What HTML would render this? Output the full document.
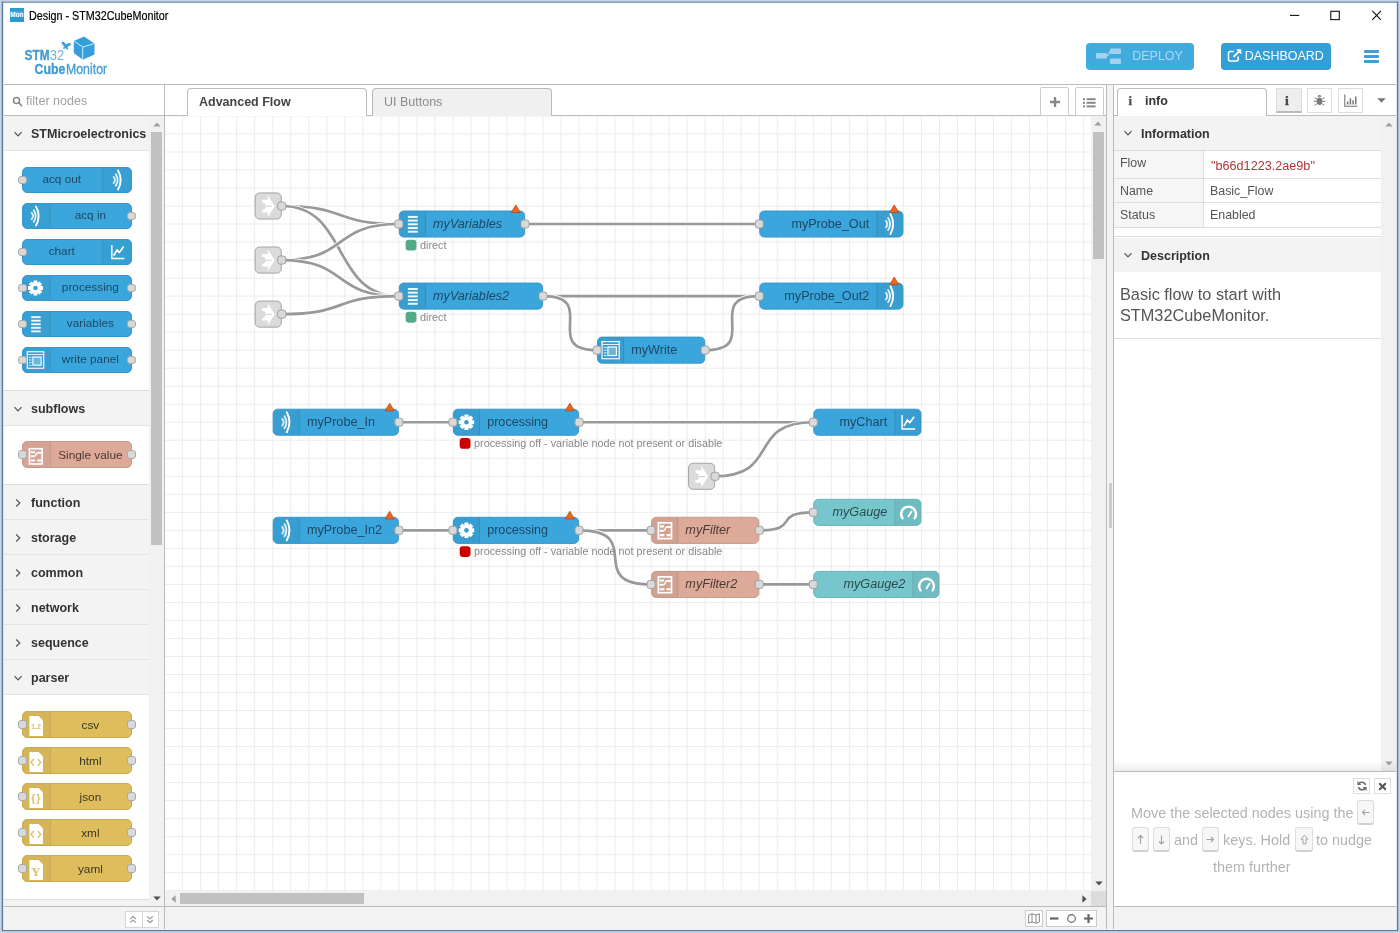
<!DOCTYPE html>
<html>
<head>
<meta charset="utf-8">
<title>Design - STM32CubeMonitor</title>
<style>
*{box-sizing:border-box;margin:0;padding:0}
html,body{width:1400px;height:933px;overflow:hidden;background:#fff;font-family:"Liberation Sans",sans-serif;color:#333}
.abs{position:absolute}
#win{position:absolute;left:0;top:0;width:1400px;height:933px;background:#fff;overflow:hidden;will-change:transform;-webkit-font-smoothing:antialiased}
/* window frame */
/* title bar */
#title{left:29px;top:8.8px;font-size:12px;line-height:14px;color:#000;transform:scaleX(.897);transform-origin:0 0;white-space:nowrap;-webkit-text-stroke:.2px #000}
#appicon{left:10px;top:8px;width:14px;height:14px}
/* header */
#hdrline{left:3px;top:84px;width:1394px;height:1px;background:#bbb}
.hbtn{top:43.3px;height:26.8px;border-radius:4px;color:#fff;font-size:12.5px;line-height:27px;white-space:nowrap}
#deploy{left:1086.2px;width:107.4px;background:#41abde}
#dash{left:1220.7px;width:110.6px;background:#329fd8}
/* palette */
#pal{left:3px;top:85px;width:162px;height:845px;background:#fff;border-right:1px solid #bbb}
#palsearch{left:0;top:0;width:161px;height:31px;border-bottom:1px solid #bbb;background:#fff}
#palbody{left:0;top:31px;width:146px;height:790px;background:#fff;overflow:hidden}
#palscroll{left:146px;top:31px;width:15px;height:790px;background:#f1f1f1}
#palfoot{left:0;top:821px;width:161px;height:24px;background:#f3f3f3;border-top:1px solid #bbb}
.cat{position:absolute;left:0;width:146px;height:35px;background:#f3f3f3;border-bottom:1px solid #e4e4e4;font-weight:bold;font-size:12.5px;line-height:37px;padding-left:28px;color:#333;white-space:nowrap}
/* workspace */
#wstabs{left:165px;top:85px;width:941px;height:31px;background:#fff;border-bottom:1px solid #bbb}
.tab{position:absolute;top:3px;height:28px;border:1px solid #bbb;border-bottom:none;border-radius:4px 4px 0 0;font-size:12.5px;line-height:26px;padding-left:11px;white-space:nowrap}
#canvas{left:165px;top:116px;width:926px;height:775px;overflow:hidden;background:#fff}
#vscroll{left:1091px;top:116px;width:15px;height:775px;background:#f1f1f1}
#hscroll{left:165px;top:891px;width:926px;height:15px;background:#f1f1f1}
#wsfoot{left:165px;top:906px;width:941px;height:24px;background:#f3f3f3;border-top:1px solid #bbb}
#sep{left:1106px;top:85px;width:8px;height:845px;background:#f3f3f3;border-left:1px solid #bbb;border-right:1px solid #bbb}
/* sidebar */
#side{left:1114px;top:85px;width:283px;height:845px;background:#fff}

.pn{position:absolute;left:19px;width:109.5px;height:26.4px;border:1px solid;border-radius:5px}
.pic{position:absolute;top:0;bottom:0;width:29px;background:rgba(0,0,0,.04)}
.pl{position:absolute;top:-1px;height:24.4px;line-height:24.4px;text-align:center;font-size:11.8px;white-space:nowrap}
.pp{position:absolute;top:7.9px;width:8.6px;height:8.6px;background:#d9d9d9;border:1px solid #aaa;border-radius:3px}
.sbtn{position:absolute;background:#fff;border:1px solid #ccc}
.kbd{position:absolute;border:1px solid #ddd;border-bottom:2px solid #d0d0d0;border-radius:3px;background:#f7f7f7;color:#909090;text-align:center}
.tip{position:absolute;color:#b3b3b3;font-size:14.4px;line-height:18px;white-space:nowrap}
.irow{position:absolute;left:0;width:267px;border-bottom:1px solid #ddd;font-size:12.4px;line-height:14px;color:#555}
.irow .k{position:absolute;left:6px;top:0}
.irow .v{position:absolute;left:96px;top:0}
.shdr{position:absolute;left:0;width:267px;height:34.5px;background:#f3f3f3;font-weight:bold;font-size:12.5px;line-height:36px;padding-left:27px;color:#333}
</style>
</head>
<body>
<div id="win">
  <!-- title bar -->
  <div id="appicon" class="abs"><svg width="14" height="14" viewBox="0 0 14 14"><rect width="14" height="14" fill="#2e9ad2"/><rect x="0" y="3.5" width="14" height="5.5" fill="#7cc3e8" opacity=".55"/><text x="0.6" y="8.7" font-size="7.6" font-weight="bold" fill="#fff" font-family="Liberation Sans, sans-serif" textLength="12.8" lengthAdjust="spacingAndGlyphs">Mon</text></svg></div>
  <div id="title" class="abs">Design - STM32CubeMonitor</div>
  <svg class="abs" style="left:1280px;top:3px" width="117" height="28" viewBox="0 0 117 28" fill="none" stroke="#111" stroke-width="1.1">
    <path d="M10 12.4H19.3"/>
    <rect x="50.8" y="8.3" width="8.5" height="8.3"/>
    <path d="M92.3 7.9L100.9 16.8M100.9 7.9L92.3 16.8" stroke-width="1.15"/>
  </svg>
  <!-- header -->
  <svg id="logo" class="abs" style="left:20px;top:32px" width="100" height="50" viewBox="20 32 100 50" font-family="Liberation Sans, sans-serif">
    <g fill="#3d9dd6">
      <text transform="translate(24.6 60.1) scale(.80 1)" font-size="14.8" font-weight="bold" fill="#3f9bd2" stroke="#3f9bd2" stroke-width=".35">STM</text>
      <text transform="translate(49.8 60.1) scale(.88 1)" font-size="14.6" fill="#73aed6">32</text>
      <text transform="translate(34.6 73.6) scale(.83 1)" font-size="14.8" font-weight="bold" fill="#3f9bd2" stroke="#3f9bd2" stroke-width=".35">Cube</text>
      <text transform="translate(66 73.6) scale(.845 1)" font-size="14.6" fill="#469fd5" stroke="#469fd5" stroke-width=".35">Monitor</text>
    </g>
    <path d="M84.1 36.5L94.5 43.5V54.5L82.8 59.7L73.8 52.9V41Z" fill="#369fdb"/>
    <path d="M74 41.1L82.7 47L94.4 43.6M82.7 47V59.5" stroke="#c9ecfb" stroke-width="1" fill="none"/>
    <g fill="#3f9fd8"><ellipse cx="64" cy="44.2" rx="3.1" ry="1.5" transform="rotate(52 64 44.2)"/><ellipse cx="67.9" cy="45" rx="3.3" ry="1.5" transform="rotate(-22 67.9 45)"/><ellipse cx="64.7" cy="47.6" rx="1.7" ry="1" transform="rotate(-30 64.7 47.6)"/><ellipse cx="67" cy="48" rx="1.6" ry="1" transform="rotate(55 67 48)"/></g>
  </svg>
  <div id="deploy" class="abs hbtn">
    <svg class="abs" style="left:9px;top:4px" width="28" height="18" viewBox="0 0 28 18"><g fill="#9fd3ef"><rect x="1" y="6" width="11" height="5.5" rx="1"/><rect x="15" y="1.5" width="11" height="5.5" rx="1"/><rect x="15" y="11.5" width="11" height="5.5" rx="1"/></g><path d="M12 8.7C14 8.7 13.5 4.2 15.5 4.2" stroke="#9fd3ef" stroke-width="1.3" fill="none"/></svg>
    <span class="abs" style="left:46px;top:0;color:#a9d8f1">DEPLOY</span>
  </div>
  <div id="dash" class="abs hbtn">
    <svg class="abs" style="left:6px;top:5px" width="16" height="15" viewBox="0 0 16 15" fill="none" stroke="#fff"><path d="M11.2 8.6V11.4A1.6 1.6 0 0 1 9.6 13H3.1A1.6 1.6 0 0 1 1.5 11.4V5.1A1.6 1.6 0 0 1 3.1 3.5H7" stroke-width="1.6"/><path d="M6.6 8.9L13.2 2.3" stroke-width="2"/><path d="M9 1.2H14.3V6.5Z" fill="#fff" stroke="none"/></svg>
    <span class="abs" style="left:24px;top:0;color:#fff">DASHBOARD</span>
  </div>
  <div class="abs" style="left:1364px;top:50px;width:15px;height:2.6px;background:#3e9fd8;border-radius:1px"></div>
  <div class="abs" style="left:1364px;top:55px;width:15px;height:2.6px;background:#3e9fd8;border-radius:1px"></div>
  <div class="abs" style="left:1364px;top:60px;width:15px;height:2.6px;background:#3e9fd8;border-radius:1px"></div>
  <div id="hdrline" class="abs"></div>
  <!-- palette -->
  <div id="pal" class="abs">
    <div id="palsearch" class="abs">
      <svg class="abs" style="left:9px;top:11px" width="11" height="11" viewBox="0 0 11 11" fill="none" stroke="#8a8a8a" stroke-width="1.6"><circle cx="4.5" cy="4.5" r="3"/><path d="M6.8 6.8L9.6 9.6" stroke-linecap="round"/></svg>
      <div class="abs" style="left:23px;top:9px;font-size:12.5px;line-height:15px;color:#a0a0a0">filter nodes</div>
    </div>
    <div id="palbody" class="abs"><div class="cat" style="top:0px"><svg class="abs" style="left:10.3px;top:13px" width="10" height="10" viewBox="0 0 10 10" fill="none" stroke="#555" stroke-width="1.2"><path d="M1.5 3.2L5 6.8L8.5 3.2"/></svg>STMicroelectronics</div>
<div class="pn" style="top:51px;background:#3ba6dc;border-color:#3796cb"><div class="pic" style="right:0;border-left:1px solid rgba(0,0,0,.06);border-radius:0 4px 4px 0"></div><svg class="abs" style="left:80px;top:-1px" width="29" height="26" viewBox="0 0 30 30" fill="none" stroke="#fff" stroke-linecap="round"><path d="M10.6 11.4Q13.6 15 10.6 18.6" stroke-width="2.2" opacity=".8"/><path d="M13 8.3Q17.4 15 13 21.7" stroke-width="2" opacity=".9"/><path d="M15.6 4Q21.6 15 15.6 26" stroke-width="2.2"/></svg><div class="pl" style="left:0;top:-1px;width:77.5px;color:#1c4866">acq out</div><div class="pp" style="left:-5px"></div></div>
<div class="pn" style="top:87px;background:#3ba6dc;border-color:#3796cb"><div class="pic" style="left:0;width:28px;border-right:1px solid rgba(0,0,0,.06);border-radius:4px 0 0 4px"></div><svg class="abs" style="left:-1.6px;top:-1px" width="29" height="26" viewBox="0 0 30 30" fill="none" stroke="#fff" stroke-linecap="round"><path d="M10.6 11.4Q13.6 15 10.6 18.6" stroke-width="2.2" opacity=".8"/><path d="M13 8.3Q17.4 15 13 21.7" stroke-width="2" opacity=".9"/><path d="M15.6 4Q21.6 15 15.6 26" stroke-width="2.2"/></svg><div class="pl" style="left:27.4px;top:-1px;width:80px;color:#1c4866">acq in</div><div class="pp" style="right:-5px"></div></div>
<div class="pn" style="top:123px;background:#3ba6dc;border-color:#3796cb"><div class="pic" style="right:0;border-left:1px solid rgba(0,0,0,.06);border-radius:0 4px 4px 0"></div><svg class="abs" style="left:80px;top:-1px" width="29" height="26" viewBox="0 0 30 30" fill="none" stroke="#fff" stroke-width="1.6"><path d="M8.5 7V22.5H23"/><path d="M11 18.5L14.5 12.5L17 15.5L21.5 9.5" stroke-width="1.9" stroke-linejoin="round" stroke-linecap="round"/></svg><div class="pl" style="left:0;top:-1px;width:77.5px;color:#1c4866">chart</div><div class="pp" style="left:-5px"></div></div>
<div class="pn" style="top:159px;background:#3ba6dc;border-color:#3796cb"><div class="pic" style="left:0;width:28px;border-right:1px solid rgba(0,0,0,.06);border-radius:4px 0 0 4px"></div><svg class="abs" style="left:-1.6px;top:-1px" width="29" height="26" viewBox="0 0 30 30"><g fill="#fff"><rect x="-2.3" y="-8.6" width="4.6" height="5" rx=".6" transform="translate(15 15) rotate(0)"/><rect x="-2.3" y="-8.6" width="4.6" height="5" rx=".6" transform="translate(15 15) rotate(45)"/><rect x="-2.3" y="-8.6" width="4.6" height="5" rx=".6" transform="translate(15 15) rotate(90)"/><rect x="-2.3" y="-8.6" width="4.6" height="5" rx=".6" transform="translate(15 15) rotate(135)"/><rect x="-2.3" y="-8.6" width="4.6" height="5" rx=".6" transform="translate(15 15) rotate(180)"/><rect x="-2.3" y="-8.6" width="4.6" height="5" rx=".6" transform="translate(15 15) rotate(225)"/><rect x="-2.3" y="-8.6" width="4.6" height="5" rx=".6" transform="translate(15 15) rotate(270)"/><rect x="-2.3" y="-8.6" width="4.6" height="5" rx=".6" transform="translate(15 15) rotate(315)"/><path fill-rule="evenodd" d="M15 8.6a6.4 6.4 0 1 0 0 12.8a6.4 6.4 0 1 0 0-12.8zM15 12.4a2.6 2.6 0 1 1 0 5.2a2.6 2.6 0 1 1 0-5.2z"/></g></svg><div class="pl" style="left:27.4px;top:-1px;width:80px;color:#1c4866">processing</div><div class="pp" style="left:-5px"></div><div class="pp" style="right:-5px"></div></div>
<div class="pn" style="top:195px;background:#3ba6dc;border-color:#3796cb"><div class="pic" style="left:0;width:28px;border-right:1px solid rgba(0,0,0,.06);border-radius:4px 0 0 4px"></div><svg class="abs" style="left:-1.6px;top:-1px" width="29" height="26" viewBox="0 0 30 30"><g fill="#fff" opacity=".92"><rect x="10" y="6" width="11" height="2.2"/><rect x="10" y="10.1" width="11" height="2.2"/><rect x="10" y="14.2" width="11" height="2.2"/><rect x="10" y="18.3" width="11" height="2.2"/><rect x="10" y="22.4" width="11" height="2.2"/></g></svg><div class="pl" style="left:27.4px;top:-1px;width:80px;color:#1c4866">variables</div><div class="pp" style="left:-5px"></div><div class="pp" style="right:-5px"></div></div>
<div class="pn" style="top:231px;background:#3ba6dc;border-color:#3796cb"><div class="pic" style="left:0;width:28px;border-right:1px solid rgba(0,0,0,.06);border-radius:4px 0 0 4px"></div><svg class="abs" style="left:-1.6px;top:-1px" width="29" height="26" viewBox="0 0 30 30" fill="none" stroke="#fff" stroke-width="1.3"><rect x="5.5" y="5.5" width="19" height="19"/><path d="M5.5 8.7H24.5" stroke-width="1"/><rect x="12" y="11.5" width="9.5" height="9.5" fill="rgba(255,255,255,.25)"/><path d="M7.5 12H10.5M7.5 15H10.5M7.5 18H10.5M7.5 21H10.5" stroke-width="1"/></svg><div class="pl" style="left:27.4px;top:-1px;width:80px;color:#1c4866">write panel</div><div class="pp" style="left:-5px"></div><div class="pp" style="right:-5px"></div></div>
<div class="abs" style="left:0;top:274px;width:146px;height:1px;background:#ddd"></div>
<div class="cat" style="top:275px"><svg class="abs" style="left:10.3px;top:13px" width="10" height="10" viewBox="0 0 10 10" fill="none" stroke="#555" stroke-width="1.2"><path d="M1.5 3.2L5 6.8L8.5 3.2"/></svg>subflows</div>
<div class="pn" style="top:325.4px;background:#ddaa99;border-color:#c49a8c"><div class="pic" style="left:0;width:28px;border-right:1px solid rgba(0,0,0,.06);border-radius:4px 0 0 4px"></div><svg class="abs" style="left:-1.6px;top:0.3px" width="29" height="26" viewBox="0 0 30 30" fill="none" stroke="#fff"><rect x="8" y="6.6" width="14.6" height="17.6" stroke-width="1.9"/><path d="M9.5 10.6h5M9.5 15.4h4M9.5 20.3h5.2M17 20.3h4.6M17.2 11.3h4.4" stroke-width="2.3"/><path d="M13.5 15.4c2.6 0 1.6-4.1 4.4-4.1" stroke-width="1.6"/></svg><div class="pl" style="left:27.4px;top:0.3px;width:80px;color:#4a3933">Single value</div><div class="pp" style="left:-5px"></div><div class="pp" style="right:-5px"></div></div>
<div class="abs" style="left:0;top:368px;width:146px;height:1px;background:#ddd"></div>
<div class="cat" style="top:369px"><svg class="abs" style="left:10.3px;top:13px" width="10" height="10" viewBox="0 0 10 10" fill="none" stroke="#555" stroke-width="1.2"><path d="M3.2 1.5L6.8 5L3.2 8.5"/></svg>function</div>
<div class="cat" style="top:404px"><svg class="abs" style="left:10.3px;top:13px" width="10" height="10" viewBox="0 0 10 10" fill="none" stroke="#555" stroke-width="1.2"><path d="M3.2 1.5L6.8 5L3.2 8.5"/></svg>storage</div>
<div class="cat" style="top:439px"><svg class="abs" style="left:10.3px;top:13px" width="10" height="10" viewBox="0 0 10 10" fill="none" stroke="#555" stroke-width="1.2"><path d="M3.2 1.5L6.8 5L3.2 8.5"/></svg>common</div>
<div class="cat" style="top:474px"><svg class="abs" style="left:10.3px;top:13px" width="10" height="10" viewBox="0 0 10 10" fill="none" stroke="#555" stroke-width="1.2"><path d="M3.2 1.5L6.8 5L3.2 8.5"/></svg>network</div>
<div class="cat" style="top:509px"><svg class="abs" style="left:10.3px;top:13px" width="10" height="10" viewBox="0 0 10 10" fill="none" stroke="#555" stroke-width="1.2"><path d="M3.2 1.5L6.8 5L3.2 8.5"/></svg>sequence</div>
<div class="cat" style="top:544px"><svg class="abs" style="left:10.3px;top:13px" width="10" height="10" viewBox="0 0 10 10" fill="none" stroke="#555" stroke-width="1.2"><path d="M1.5 3.2L5 6.8L8.5 3.2"/></svg>parser</div>
<div class="pn" style="top:595.4px;background:#debd5c;border-color:#c9aa52"><div class="pic" style="left:0;width:28px;border-right:1px solid rgba(0,0,0,.06);border-radius:4px 0 0 4px"></div><svg class="abs" style="left:-1.6px;top:0.3px" width="29" height="26" viewBox="0 0 30 30"><path d="M8 3.6H18.6L23.6 8.6V26.6H8Z" fill="#fff"/><text x="15.4" y="18" font-size="8.8" font-weight="bold" text-anchor="middle" fill="#dcc06c" font-family="Liberation Sans,sans-serif" letter-spacing="-.3">1.2</text></svg><div class="pl" style="left:27.4px;top:0.3px;width:80px;color:#3b3627">csv</div><div class="pp" style="left:-5px"></div><div class="pp" style="right:-5px"></div></div>
<div class="pn" style="top:631.4px;background:#debd5c;border-color:#c9aa52"><div class="pic" style="left:0;width:28px;border-right:1px solid rgba(0,0,0,.06);border-radius:4px 0 0 4px"></div><svg class="abs" style="left:-1.6px;top:0.3px" width="29" height="26" viewBox="0 0 30 30"><path d="M8 3.6H18.6L23.6 8.6V26.6H8Z" fill="#fff"/><path d="M13 11.4L9.8 15.4L13 19.4M17.8 11.4L21 15.4L17.8 19.4" fill="none" stroke="#dcc06c" stroke-width="1.6"/></svg><div class="pl" style="left:27.4px;top:0.3px;width:80px;color:#3b3627">html</div><div class="pp" style="left:-5px"></div><div class="pp" style="right:-5px"></div></div>
<div class="pn" style="top:667.4px;background:#debd5c;border-color:#c9aa52"><div class="pic" style="left:0;width:28px;border-right:1px solid rgba(0,0,0,.06);border-radius:4px 0 0 4px"></div><svg class="abs" style="left:-1.6px;top:0.3px" width="29" height="26" viewBox="0 0 30 30"><path d="M8 3.6H18.6L23.6 8.6V26.6H8Z" fill="#fff"/><text x="15.8" y="20" font-size="12.5" font-weight="bold" text-anchor="middle" fill="#dcc06c" font-family="Liberation Sans,sans-serif" letter-spacing="1.2">{}</text></svg><div class="pl" style="left:27.4px;top:0.3px;width:80px;color:#3b3627">json</div><div class="pp" style="left:-5px"></div><div class="pp" style="right:-5px"></div></div>
<div class="pn" style="top:703.4px;background:#debd5c;border-color:#c9aa52"><div class="pic" style="left:0;width:28px;border-right:1px solid rgba(0,0,0,.06);border-radius:4px 0 0 4px"></div><svg class="abs" style="left:-1.6px;top:0.3px" width="29" height="26" viewBox="0 0 30 30"><path d="M8 3.6H18.6L23.6 8.6V26.6H8Z" fill="#fff"/><path d="M13 11.4L9.8 15.4L13 19.4M17.8 11.4L21 15.4L17.8 19.4" fill="none" stroke="#dcc06c" stroke-width="1.6"/></svg><div class="pl" style="left:27.4px;top:0.3px;width:80px;color:#3b3627">xml</div><div class="pp" style="left:-5px"></div><div class="pp" style="right:-5px"></div></div>
<div class="pn" style="top:739.4px;background:#debd5c;border-color:#c9aa52"><div class="pic" style="left:0;width:28px;border-right:1px solid rgba(0,0,0,.06);border-radius:4px 0 0 4px"></div><svg class="abs" style="left:-1.6px;top:0.3px" width="29" height="26" viewBox="0 0 30 30"><path d="M8 3.6H18.6L23.6 8.6V26.6H8Z" fill="#fff"/><text x="15.4" y="21.4" font-size="15.5" font-weight="bold" text-anchor="middle" fill="#dcc06c" font-family="Liberation Serif,serif">Y</text></svg><div class="pl" style="left:27.4px;top:0.3px;width:80px;color:#3b3627">yaml</div><div class="pp" style="left:-5px"></div><div class="pp" style="right:-5px"></div></div>
<div class="abs" style="left:0;top:783px;width:146px;height:7px;background:#f3f3f3;border-top:1px solid #ddd"></div></div>
    <div id="palscroll" class="abs">
      <svg class="abs" style="left:3.5px;top:5.5px" width="8" height="5" viewBox="0 0 8 5"><path d="M.3 4.6L4 .6L7.7 4.6Z" fill="#a0a0a0"/></svg>
      <div class="abs" style="left:2px;top:16px;width:11px;height:413px;background:#c1c1c1"></div>
      <svg class="abs" style="left:3.5px;top:779.5px" width="8" height="5" viewBox="0 0 8 5"><path d="M.3 .4L4 4.6L7.7 .4Z" fill="#505050"/></svg>
    </div>
    <div id="palfoot" class="abs">
      <div class="sbtn" style="left:121.5px;top:3.6px;width:17px;height:17px;border-right:none;border-color:#d6d6d6"></div>
      <div class="sbtn" style="left:138.5px;top:3.6px;width:17px;height:17px;border-color:#d6d6d6"></div>
      <svg class="abs" style="left:126px;top:8px" width="8" height="9" viewBox="0 0 8 9" fill="none" stroke="#999" stroke-width="1.2"><path d="M1.2 4L4 1.4L6.8 4M1.2 7.6L4 5L6.8 7.6"/></svg>
      <svg class="abs" style="left:143px;top:8px" width="8" height="9" viewBox="0 0 8 9" fill="none" stroke="#999" stroke-width="1.2"><path d="M1.2 1.4L4 4L6.8 1.4M1.2 5L4 7.6L6.8 5"/></svg>
    </div>
  </div>
  <!-- workspace -->
  <div id="wstabs" class="abs">
    <div class="tab" style="left:22px;width:180px;background:#fff;height:29px;font-weight:bold;color:#444">Advanced Flow</div>
    <div class="tab" style="left:207px;width:180px;background:#f0f0f0;color:#8a8a8a">UI Buttons</div>
    <div class="sbtn" style="left:875.3px;top:2.2px;width:29px;height:29.3px;border-radius:2px 2px 0 0"></div>
    <div class="sbtn" style="left:910px;top:2.2px;width:28.7px;height:29.3px;border-radius:2px 2px 0 0"></div>
    <svg class="abs" style="left:884px;top:11px" width="12" height="12" viewBox="0 0 12 12"><path d="M6 1V11M1 6H11" stroke="#888" stroke-width="2.4" fill="none"/></svg>
    <svg class="abs" style="left:918px;top:13px" width="13" height="10" viewBox="0 0 13 10" fill="#888"><rect x="0" y=".2" width="2" height="2"/><rect x="3.6" y=".2" width="9" height="2"/><rect x="0" y="3.8" width="2" height="2"/><rect x="3.6" y="3.8" width="9" height="2"/><rect x="0" y="7.4" width="2" height="2"/><rect x="3.6" y="7.4" width="9" height="2"/></svg>
  </div>
  <div id="canvas" class="abs"><svg width="926" height="775" viewBox="0 0 926 775" font-family="Liberation Sans, sans-serif"><g transform="translate(-.4 -.1) scale(.901)"><path d="M0 0V862M20 0V862M40 0V862M60 0V862M80 0V862M100 0V862M120 0V862M140 0V862M160 0V862M180 0V862M200 0V862M220 0V862M240 0V862M260 0V862M280 0V862M300 0V862M320 0V862M340 0V862M360 0V862M380 0V862M400 0V862M420 0V862M440 0V862M460 0V862M480 0V862M500 0V862M520 0V862M540 0V862M560 0V862M580 0V862M600 0V862M620 0V862M640 0V862M660 0V862M680 0V862M700 0V862M720 0V862M740 0V862M760 0V862M780 0V862M800 0V862M820 0V862M840 0V862M860 0V862M880 0V862M900 0V862M920 0V862M940 0V862M960 0V862M980 0V862M1000 0V862M1020 0V862M0 0H1030M0 20H1030M0 40H1030M0 60H1030M0 80H1030M0 100H1030M0 120H1030M0 140H1030M0 160H1030M0 180H1030M0 200H1030M0 220H1030M0 240H1030M0 260H1030M0 280H1030M0 300H1030M0 320H1030M0 340H1030M0 360H1030M0 380H1030M0 400H1030M0 420H1030M0 440H1030M0 460H1030M0 480H1030M0 500H1030M0 520H1030M0 540H1030M0 560H1030M0 580H1030M0 600H1030M0 620H1030M0 640H1030M0 660H1030M0 680H1030M0 700H1030M0 720H1030M0 740H1030M0 760H1030M0 780H1030M0 800H1030M0 820H1030M0 840H1030M0 860H1030" fill="none" stroke="#eaeaea" stroke-width="1"/>
<g fill="none" stroke-linecap="butt">
<path d="M 130 100 C 205 100 185 120 260 120" stroke="#fff" stroke-width="5" opacity=".9"/>
<path d="M 130 100 C 205 100 185 120 260 120" stroke="#999" stroke-width="3"/>
<path d="M 130 100 C 205 100 185 200 260 200" stroke="#fff" stroke-width="5" opacity=".9"/>
<path d="M 130 100 C 205 100 185 200 260 200" stroke="#999" stroke-width="3"/>
<path d="M 130 160 C 205 160 185 120 260 120" stroke="#fff" stroke-width="5" opacity=".9"/>
<path d="M 130 160 C 205 160 185 120 260 120" stroke="#999" stroke-width="3"/>
<path d="M 130 160 C 205 160 185 200 260 200" stroke="#fff" stroke-width="5" opacity=".9"/>
<path d="M 130 160 C 205 160 185 200 260 200" stroke="#999" stroke-width="3"/>
<path d="M 130 220 C 205 220 185 200 260 200" stroke="#fff" stroke-width="5" opacity=".9"/>
<path d="M 130 220 C 205 220 185 200 260 200" stroke="#999" stroke-width="3"/>
<path d="M 400 120 C 475 120 585 120 660 120" stroke="#fff" stroke-width="5" opacity=".9"/>
<path d="M 400 120 C 475 120 585 120 660 120" stroke="#999" stroke-width="3"/>
<path d="M 420 200 C 495 200 585 200 660 200" stroke="#fff" stroke-width="5" opacity=".9"/>
<path d="M 420 200 C 495 200 585 200 660 200" stroke="#999" stroke-width="3"/>
<path d="M 420 200 C 483.64 200 416.36 260 480 260" stroke="#fff" stroke-width="5" opacity=".9"/>
<path d="M 420 200 C 483.64 200 416.36 260 480 260" stroke="#999" stroke-width="3"/>
<path d="M 600 260 C 663.64 260 596.36 200 660 200" stroke="#fff" stroke-width="5" opacity=".9"/>
<path d="M 600 260 C 663.64 260 596.36 200 660 200" stroke="#999" stroke-width="3"/>
<path d="M 260 340 C 305 340 275 340 320 340" stroke="#fff" stroke-width="5" opacity=".9"/>
<path d="M 260 340 C 305 340 275 340 320 340" stroke="#999" stroke-width="3"/>
<path d="M 460 340 C 535 340 645 340 720 340" stroke="#fff" stroke-width="5" opacity=".9"/>
<path d="M 460 340 C 535 340 645 340 720 340" stroke="#999" stroke-width="3"/>
<path d="M 610 400 C 685 400 645 340 720 340" stroke="#fff" stroke-width="5" opacity=".9"/>
<path d="M 610 400 C 685 400 645 340 720 340" stroke="#999" stroke-width="3"/>
<path d="M 260 460 C 305 460 275 460 320 460" stroke="#fff" stroke-width="5" opacity=".9"/>
<path d="M 260 460 C 305 460 275 460 320 460" stroke="#999" stroke-width="3"/>
<path d="M 460 460 C 520 460 480 460 540 460" stroke="#fff" stroke-width="5" opacity=".9"/>
<path d="M 460 460 C 520 460 480 460 540 460" stroke="#999" stroke-width="3"/>
<path d="M 460 460 C 535 460 465 520 540 520" stroke="#fff" stroke-width="5" opacity=".9"/>
<path d="M 460 460 C 535 460 465 520 540 520" stroke="#999" stroke-width="3"/>
<path d="M 660 460 C 707.434 460 672.566 440 720 440" stroke="#fff" stroke-width="5" opacity=".9"/>
<path d="M 660 460 C 707.434 460 672.566 440 720 440" stroke="#999" stroke-width="3"/>
<path d="M 660 520 C 705 520 675 520 720 520" stroke="#fff" stroke-width="5" opacity=".9"/>
<path d="M 660 520 C 705 520 675 520 720 520" stroke="#999" stroke-width="3"/>
</g>
<g transform="translate(100 85)"><rect x=".5" y=".5" width="29" height="29" rx="5" ry="5" fill="#dbdbdb" stroke="#9c9c9c" stroke-width="1"/><g transform="translate(0 0)"><path fill="#fff" d="M14.6 3.2L22.2 15.2L14.6 27.2V22.2H8.2V19.2A4 4 0 0 0 8.2 11.2V8.2H14.6Z"/><path d="M12.3 15.2H19.4" stroke="#cfcfcf" stroke-width="1.1" fill="none"/></g><rect x="25.5" y="10.5" width="9" height="9" rx="3" ry="3" fill="#d9d9d9" stroke="#a0a0a0" stroke-width="1.1"/></g>
<g transform="translate(100 145)"><rect x=".5" y=".5" width="29" height="29" rx="5" ry="5" fill="#dbdbdb" stroke="#9c9c9c" stroke-width="1"/><g transform="translate(0 0)"><path fill="#fff" d="M14.6 3.2L22.2 15.2L14.6 27.2V22.2H8.2V19.2A4 4 0 0 0 8.2 11.2V8.2H14.6Z"/><path d="M12.3 15.2H19.4" stroke="#cfcfcf" stroke-width="1.1" fill="none"/></g><rect x="25.5" y="10.5" width="9" height="9" rx="3" ry="3" fill="#d9d9d9" stroke="#a0a0a0" stroke-width="1.1"/></g>
<g transform="translate(100 205)"><rect x=".5" y=".5" width="29" height="29" rx="5" ry="5" fill="#dbdbdb" stroke="#9c9c9c" stroke-width="1"/><g transform="translate(0 0)"><path fill="#fff" d="M14.6 3.2L22.2 15.2L14.6 27.2V22.2H8.2V19.2A4 4 0 0 0 8.2 11.2V8.2H14.6Z"/><path d="M12.3 15.2H19.4" stroke="#cfcfcf" stroke-width="1.1" fill="none"/></g><rect x="25.5" y="10.5" width="9" height="9" rx="3" ry="3" fill="#d9d9d9" stroke="#a0a0a0" stroke-width="1.1"/></g>
<g transform="translate(260 105)"><rect x=".5" y=".5" width="139" height="29" rx="5" ry="5" fill="#3ba6dc" stroke="#3593c6" stroke-width="1"/><path d="M30 1H5.5A4.5 4.5 0 0 0 1 5.5V24.5A4.5 4.5 0 0 0 5.5 29H30Z" fill="rgba(0,0,0,.05)"/><path d="M29.5 1V29" stroke="rgba(0,0,0,.1)" stroke-width="1" fill="none"/><g transform="translate(0 0)"><g fill="#fff" opacity=".92"><rect x="10" y="6" width="11" height="2.2"/><rect x="10" y="10.1" width="11" height="2.2"/><rect x="10" y="14.2" width="11" height="2.2"/><rect x="10" y="18.3" width="11" height="2.2"/><rect x="10" y="22.4" width="11" height="2.2"/></g></g><text x="38" y="19.2" font-size="14" fill="#1c4866" font-style="italic">myVariables</text><rect x="-4.5" y="10.5" width="9" height="9" rx="3" ry="3" fill="#d9d9d9" stroke="#a0a0a0" stroke-width="1.1"/><rect x="135.5" y="10.5" width="9" height="9" rx="3" ry="3" fill="#d9d9d9" stroke="#a0a0a0" stroke-width="1.1"/><path d="M124.7 2.3L134.8 2.3L129.8 -6.2Z" fill="#ea671d" stroke="#b3420a" stroke-width=".8" stroke-linejoin="round"/><rect x="9" y="34" width="9" height="9" rx="2" ry="2" fill="#5a8" stroke="#5a8" stroke-width="3"/><text x="23.5" y="42.8" font-size="12" fill="#888">direct</text></g>
<g transform="translate(260 185)"><rect x=".5" y=".5" width="159" height="29" rx="5" ry="5" fill="#3ba6dc" stroke="#3593c6" stroke-width="1"/><path d="M30 1H5.5A4.5 4.5 0 0 0 1 5.5V24.5A4.5 4.5 0 0 0 5.5 29H30Z" fill="rgba(0,0,0,.05)"/><path d="M29.5 1V29" stroke="rgba(0,0,0,.1)" stroke-width="1" fill="none"/><g transform="translate(0 0)"><g fill="#fff" opacity=".92"><rect x="10" y="6" width="11" height="2.2"/><rect x="10" y="10.1" width="11" height="2.2"/><rect x="10" y="14.2" width="11" height="2.2"/><rect x="10" y="18.3" width="11" height="2.2"/><rect x="10" y="22.4" width="11" height="2.2"/></g></g><text x="38" y="19.2" font-size="14" fill="#1c4866" font-style="italic">myVariables2</text><rect x="-4.5" y="10.5" width="9" height="9" rx="3" ry="3" fill="#d9d9d9" stroke="#a0a0a0" stroke-width="1.1"/><rect x="155.5" y="10.5" width="9" height="9" rx="3" ry="3" fill="#d9d9d9" stroke="#a0a0a0" stroke-width="1.1"/><rect x="9" y="34" width="9" height="9" rx="2" ry="2" fill="#5a8" stroke="#5a8" stroke-width="3"/><text x="23.5" y="42.8" font-size="12" fill="#888">direct</text></g>
<g transform="translate(660 105)"><rect x=".5" y=".5" width="159" height="29" rx="5" ry="5" fill="#3ba6dc" stroke="#3593c6" stroke-width="1"/><path d="M130 1H154.5A4.5 4.5 0 0 1 159 5.5V24.5A4.5 4.5 0 0 1 154.5 29H130Z" fill="rgba(0,0,0,.05)"/><path d="M130.5 1V29" stroke="rgba(0,0,0,.1)" stroke-width="1" fill="none"/><g transform="translate(130 0)"><g fill="none" stroke="#fff" stroke-linecap="round"><path d="M10.6 11.4Q13.6 15 10.6 18.6" stroke-width="2.2" opacity=".8"/><path d="M13 8.3Q17.4 15 13 21.7" stroke-width="2" opacity=".9"/><path d="M15.6 4Q21.6 15 15.6 26" stroke-width="2.2"/></g></g><text x="122" y="19.2" text-anchor="end" font-size="14" fill="#1c4866">myProbe_Out</text><rect x="-4.5" y="10.5" width="9" height="9" rx="3" ry="3" fill="#d9d9d9" stroke="#a0a0a0" stroke-width="1.1"/><path d="M144.7 2.3L154.8 2.3L149.8 -6.2Z" fill="#ea671d" stroke="#b3420a" stroke-width=".8" stroke-linejoin="round"/></g>
<g transform="translate(660 185)"><rect x=".5" y=".5" width="159" height="29" rx="5" ry="5" fill="#3ba6dc" stroke="#3593c6" stroke-width="1"/><path d="M130 1H154.5A4.5 4.5 0 0 1 159 5.5V24.5A4.5 4.5 0 0 1 154.5 29H130Z" fill="rgba(0,0,0,.05)"/><path d="M130.5 1V29" stroke="rgba(0,0,0,.1)" stroke-width="1" fill="none"/><g transform="translate(130 0)"><g fill="none" stroke="#fff" stroke-linecap="round"><path d="M10.6 11.4Q13.6 15 10.6 18.6" stroke-width="2.2" opacity=".8"/><path d="M13 8.3Q17.4 15 13 21.7" stroke-width="2" opacity=".9"/><path d="M15.6 4Q21.6 15 15.6 26" stroke-width="2.2"/></g></g><text x="122" y="19.2" text-anchor="end" font-size="14" fill="#1c4866">myProbe_Out2</text><rect x="-4.5" y="10.5" width="9" height="9" rx="3" ry="3" fill="#d9d9d9" stroke="#a0a0a0" stroke-width="1.1"/><path d="M144.7 2.3L154.8 2.3L149.8 -6.2Z" fill="#ea671d" stroke="#b3420a" stroke-width=".8" stroke-linejoin="round"/></g>
<g transform="translate(480 245)"><rect x=".5" y=".5" width="119" height="29" rx="5" ry="5" fill="#3ba6dc" stroke="#3593c6" stroke-width="1"/><path d="M30 1H5.5A4.5 4.5 0 0 0 1 5.5V24.5A4.5 4.5 0 0 0 5.5 29H30Z" fill="rgba(0,0,0,.05)"/><path d="M29.5 1V29" stroke="rgba(0,0,0,.1)" stroke-width="1" fill="none"/><g transform="translate(0 0)"><g fill="none" stroke="#fff" stroke-width="1.3"><rect x="5.5" y="5.5" width="19" height="19"/><path d="M5.5 8.7H24.5" stroke-width="1"/><rect x="12" y="11.5" width="9.5" height="9.5" fill="rgba(255,255,255,.25)"/><path d="M7.5 12H10.5M7.5 15H10.5M7.5 18H10.5M7.5 21H10.5" stroke-width="1"/></g></g><text x="38" y="19.2" font-size="14" fill="#1c4866">myWrite</text><rect x="-4.5" y="10.5" width="9" height="9" rx="3" ry="3" fill="#d9d9d9" stroke="#a0a0a0" stroke-width="1.1"/><rect x="115.5" y="10.5" width="9" height="9" rx="3" ry="3" fill="#d9d9d9" stroke="#a0a0a0" stroke-width="1.1"/></g>
<g transform="translate(120 325)"><rect x=".5" y=".5" width="139" height="29" rx="5" ry="5" fill="#3ba6dc" stroke="#3593c6" stroke-width="1"/><path d="M30 1H5.5A4.5 4.5 0 0 0 1 5.5V24.5A4.5 4.5 0 0 0 5.5 29H30Z" fill="rgba(0,0,0,.05)"/><path d="M29.5 1V29" stroke="rgba(0,0,0,.1)" stroke-width="1" fill="none"/><g transform="translate(0 0)"><g fill="none" stroke="#fff" stroke-linecap="round"><path d="M10.6 11.4Q13.6 15 10.6 18.6" stroke-width="2.2" opacity=".8"/><path d="M13 8.3Q17.4 15 13 21.7" stroke-width="2" opacity=".9"/><path d="M15.6 4Q21.6 15 15.6 26" stroke-width="2.2"/></g></g><text x="38" y="19.2" font-size="14" fill="#1c4866">myProbe_In</text><rect x="135.5" y="10.5" width="9" height="9" rx="3" ry="3" fill="#d9d9d9" stroke="#a0a0a0" stroke-width="1.1"/><path d="M124.7 2.3L134.8 2.3L129.8 -6.2Z" fill="#ea671d" stroke="#b3420a" stroke-width=".8" stroke-linejoin="round"/></g>
<g transform="translate(320 325)"><rect x=".5" y=".5" width="139" height="29" rx="5" ry="5" fill="#3ba6dc" stroke="#3593c6" stroke-width="1"/><path d="M30 1H5.5A4.5 4.5 0 0 0 1 5.5V24.5A4.5 4.5 0 0 0 5.5 29H30Z" fill="rgba(0,0,0,.05)"/><path d="M29.5 1V29" stroke="rgba(0,0,0,.1)" stroke-width="1" fill="none"/><g transform="translate(0 0)"><g fill="#fff"><rect x="-2.3" y="-8.6" width="4.6" height="5" rx=".6" transform="translate(15 15) rotate(0)"/><rect x="-2.3" y="-8.6" width="4.6" height="5" rx=".6" transform="translate(15 15) rotate(45)"/><rect x="-2.3" y="-8.6" width="4.6" height="5" rx=".6" transform="translate(15 15) rotate(90)"/><rect x="-2.3" y="-8.6" width="4.6" height="5" rx=".6" transform="translate(15 15) rotate(135)"/><rect x="-2.3" y="-8.6" width="4.6" height="5" rx=".6" transform="translate(15 15) rotate(180)"/><rect x="-2.3" y="-8.6" width="4.6" height="5" rx=".6" transform="translate(15 15) rotate(225)"/><rect x="-2.3" y="-8.6" width="4.6" height="5" rx=".6" transform="translate(15 15) rotate(270)"/><rect x="-2.3" y="-8.6" width="4.6" height="5" rx=".6" transform="translate(15 15) rotate(315)"/><path fill-rule="evenodd" d="M15 8.6a6.4 6.4 0 1 0 0 12.8a6.4 6.4 0 1 0 0-12.8zM15 12.4a2.6 2.6 0 1 1 0 5.2a2.6 2.6 0 1 1 0-5.2z"/></g></g><text x="38" y="19.2" font-size="14" fill="#1c4866">processing</text><rect x="-4.5" y="10.5" width="9" height="9" rx="3" ry="3" fill="#d9d9d9" stroke="#a0a0a0" stroke-width="1.1"/><rect x="135.5" y="10.5" width="9" height="9" rx="3" ry="3" fill="#d9d9d9" stroke="#a0a0a0" stroke-width="1.1"/><path d="M124.7 2.3L134.8 2.3L129.8 -6.2Z" fill="#ea671d" stroke="#b3420a" stroke-width=".8" stroke-linejoin="round"/><rect x="9" y="34" width="9" height="9" rx="2" ry="2" fill="#c00" stroke="#c00" stroke-width="3"/><text x="23.5" y="42.8" font-size="12" fill="#888">processing off - variable node not present or disable</text></g>
<g transform="translate(720 325)"><rect x=".5" y=".5" width="119" height="29" rx="5" ry="5" fill="#3ba6dc" stroke="#3593c6" stroke-width="1"/><path d="M90 1H114.5A4.5 4.5 0 0 1 119 5.5V24.5A4.5 4.5 0 0 1 114.5 29H90Z" fill="rgba(0,0,0,.05)"/><path d="M90.5 1V29" stroke="rgba(0,0,0,.1)" stroke-width="1" fill="none"/><g transform="translate(90 0)"><g fill="none" stroke="#fff" stroke-width="1.6"><path d="M8.5 7 V22.5 H23"/><path d="M11 18.5 L14.5 12.5 L17 15.5 L21.5 9.5" stroke-width="1.9" stroke-linejoin="round" stroke-linecap="round"/></g></g><text x="82" y="19.2" text-anchor="end" font-size="14" fill="#1c4866">myChart</text><rect x="-4.5" y="10.5" width="9" height="9" rx="3" ry="3" fill="#d9d9d9" stroke="#a0a0a0" stroke-width="1.1"/></g>
<g transform="translate(581 385)"><rect x=".5" y=".5" width="29" height="29" rx="5" ry="5" fill="#dbdbdb" stroke="#9c9c9c" stroke-width="1"/><g transform="translate(0 0)"><path fill="#fff" d="M14.6 3.2L22.2 15.2L14.6 27.2V22.2H8.2V19.2A4 4 0 0 0 8.2 11.2V8.2H14.6Z"/><path d="M12.3 15.2H19.4" stroke="#cfcfcf" stroke-width="1.1" fill="none"/></g><rect x="25.5" y="10.5" width="9" height="9" rx="3" ry="3" fill="#d9d9d9" stroke="#a0a0a0" stroke-width="1.1"/></g>
<g transform="translate(120 445)"><rect x=".5" y=".5" width="139" height="29" rx="5" ry="5" fill="#3ba6dc" stroke="#3593c6" stroke-width="1"/><path d="M30 1H5.5A4.5 4.5 0 0 0 1 5.5V24.5A4.5 4.5 0 0 0 5.5 29H30Z" fill="rgba(0,0,0,.05)"/><path d="M29.5 1V29" stroke="rgba(0,0,0,.1)" stroke-width="1" fill="none"/><g transform="translate(0 0)"><g fill="none" stroke="#fff" stroke-linecap="round"><path d="M10.6 11.4Q13.6 15 10.6 18.6" stroke-width="2.2" opacity=".8"/><path d="M13 8.3Q17.4 15 13 21.7" stroke-width="2" opacity=".9"/><path d="M15.6 4Q21.6 15 15.6 26" stroke-width="2.2"/></g></g><text x="38" y="19.2" font-size="14" fill="#1c4866">myProbe_In2</text><rect x="135.5" y="10.5" width="9" height="9" rx="3" ry="3" fill="#d9d9d9" stroke="#a0a0a0" stroke-width="1.1"/><path d="M124.7 2.3L134.8 2.3L129.8 -6.2Z" fill="#ea671d" stroke="#b3420a" stroke-width=".8" stroke-linejoin="round"/></g>
<g transform="translate(320 445)"><rect x=".5" y=".5" width="139" height="29" rx="5" ry="5" fill="#3ba6dc" stroke="#3593c6" stroke-width="1"/><path d="M30 1H5.5A4.5 4.5 0 0 0 1 5.5V24.5A4.5 4.5 0 0 0 5.5 29H30Z" fill="rgba(0,0,0,.05)"/><path d="M29.5 1V29" stroke="rgba(0,0,0,.1)" stroke-width="1" fill="none"/><g transform="translate(0 0)"><g fill="#fff"><rect x="-2.3" y="-8.6" width="4.6" height="5" rx=".6" transform="translate(15 15) rotate(0)"/><rect x="-2.3" y="-8.6" width="4.6" height="5" rx=".6" transform="translate(15 15) rotate(45)"/><rect x="-2.3" y="-8.6" width="4.6" height="5" rx=".6" transform="translate(15 15) rotate(90)"/><rect x="-2.3" y="-8.6" width="4.6" height="5" rx=".6" transform="translate(15 15) rotate(135)"/><rect x="-2.3" y="-8.6" width="4.6" height="5" rx=".6" transform="translate(15 15) rotate(180)"/><rect x="-2.3" y="-8.6" width="4.6" height="5" rx=".6" transform="translate(15 15) rotate(225)"/><rect x="-2.3" y="-8.6" width="4.6" height="5" rx=".6" transform="translate(15 15) rotate(270)"/><rect x="-2.3" y="-8.6" width="4.6" height="5" rx=".6" transform="translate(15 15) rotate(315)"/><path fill-rule="evenodd" d="M15 8.6a6.4 6.4 0 1 0 0 12.8a6.4 6.4 0 1 0 0-12.8zM15 12.4a2.6 2.6 0 1 1 0 5.2a2.6 2.6 0 1 1 0-5.2z"/></g></g><text x="38" y="19.2" font-size="14" fill="#1c4866">processing</text><rect x="-4.5" y="10.5" width="9" height="9" rx="3" ry="3" fill="#d9d9d9" stroke="#a0a0a0" stroke-width="1.1"/><rect x="135.5" y="10.5" width="9" height="9" rx="3" ry="3" fill="#d9d9d9" stroke="#a0a0a0" stroke-width="1.1"/><path d="M124.7 2.3L134.8 2.3L129.8 -6.2Z" fill="#ea671d" stroke="#b3420a" stroke-width=".8" stroke-linejoin="round"/><rect x="9" y="34" width="9" height="9" rx="2" ry="2" fill="#c00" stroke="#c00" stroke-width="3"/><text x="23.5" y="42.8" font-size="12" fill="#888">processing off - variable node not present or disable</text></g>
<g transform="translate(540 445)"><rect x=".5" y=".5" width="119" height="29" rx="5" ry="5" fill="#ddaa99" stroke="#c39584" stroke-width="1"/><path d="M30 1H5.5A4.5 4.5 0 0 0 1 5.5V24.5A4.5 4.5 0 0 0 5.5 29H30Z" fill="rgba(0,0,0,.05)"/><path d="M29.5 1V29" stroke="rgba(0,0,0,.1)" stroke-width="1" fill="none"/><g transform="translate(0 0)"><g fill="none" stroke="#fff"><rect x="8" y="6.6" width="14.6" height="17.6" stroke-width="1.9"/><path d="M9.5 10.6h5M9.5 15.4h4M9.5 20.3h5.2M17 20.3h4.6M17.2 11.3h4.4" stroke-width="2.3"/><path d="M13.5 15.4c2.6 0 1.6-4.1 4.4-4.1" stroke-width="1.6"/></g></g><text x="38" y="19.2" font-size="14" fill="#4a3933" font-style="italic">myFilter</text><rect x="-4.5" y="10.5" width="9" height="9" rx="3" ry="3" fill="#d9d9d9" stroke="#a0a0a0" stroke-width="1.1"/><rect x="115.5" y="10.5" width="9" height="9" rx="3" ry="3" fill="#d9d9d9" stroke="#a0a0a0" stroke-width="1.1"/></g>
<g transform="translate(720 425)"><rect x=".5" y=".5" width="119" height="29" rx="5" ry="5" fill="#77c6cc" stroke="#69b0b6" stroke-width="1"/><path d="M90 1H114.5A4.5 4.5 0 0 1 119 5.5V24.5A4.5 4.5 0 0 1 114.5 29H90Z" fill="rgba(0,0,0,.05)"/><path d="M90.5 1V29" stroke="rgba(0,0,0,.1)" stroke-width="1" fill="none"/><g transform="translate(90 0)"><g fill="none" stroke="#fff" stroke-linecap="round"><path d="M9 21.6A8.2 8.2 0 1 1 22.4 21.6" stroke-width="2.7"/><path d="M15.6 19.5L19 14" stroke-width="2"/></g></g><text x="82" y="19.2" text-anchor="end" font-size="14" fill="#2b4a4e" font-style="italic">myGauge</text><rect x="-4.5" y="10.5" width="9" height="9" rx="3" ry="3" fill="#d9d9d9" stroke="#a0a0a0" stroke-width="1.1"/></g>
<g transform="translate(540 505)"><rect x=".5" y=".5" width="119" height="29" rx="5" ry="5" fill="#ddaa99" stroke="#c39584" stroke-width="1"/><path d="M30 1H5.5A4.5 4.5 0 0 0 1 5.5V24.5A4.5 4.5 0 0 0 5.5 29H30Z" fill="rgba(0,0,0,.05)"/><path d="M29.5 1V29" stroke="rgba(0,0,0,.1)" stroke-width="1" fill="none"/><g transform="translate(0 0)"><g fill="none" stroke="#fff"><rect x="8" y="6.6" width="14.6" height="17.6" stroke-width="1.9"/><path d="M9.5 10.6h5M9.5 15.4h4M9.5 20.3h5.2M17 20.3h4.6M17.2 11.3h4.4" stroke-width="2.3"/><path d="M13.5 15.4c2.6 0 1.6-4.1 4.4-4.1" stroke-width="1.6"/></g></g><text x="38" y="19.2" font-size="14" fill="#4a3933" font-style="italic">myFilter2</text><rect x="-4.5" y="10.5" width="9" height="9" rx="3" ry="3" fill="#d9d9d9" stroke="#a0a0a0" stroke-width="1.1"/><rect x="115.5" y="10.5" width="9" height="9" rx="3" ry="3" fill="#d9d9d9" stroke="#a0a0a0" stroke-width="1.1"/></g>
<g transform="translate(720 505)"><rect x=".5" y=".5" width="139" height="29" rx="5" ry="5" fill="#77c6cc" stroke="#69b0b6" stroke-width="1"/><path d="M110 1H134.5A4.5 4.5 0 0 1 139 5.5V24.5A4.5 4.5 0 0 1 134.5 29H110Z" fill="rgba(0,0,0,.05)"/><path d="M110.5 1V29" stroke="rgba(0,0,0,.1)" stroke-width="1" fill="none"/><g transform="translate(110 0)"><g fill="none" stroke="#fff" stroke-linecap="round"><path d="M9 21.6A8.2 8.2 0 1 1 22.4 21.6" stroke-width="2.7"/><path d="M15.6 19.5L19 14" stroke-width="2"/></g></g><text x="102" y="19.2" text-anchor="end" font-size="14" fill="#2b4a4e" font-style="italic">myGauge2</text><rect x="-4.5" y="10.5" width="9" height="9" rx="3" ry="3" fill="#d9d9d9" stroke="#a0a0a0" stroke-width="1.1"/></g></g></svg></div>
  <div id="vscroll" class="abs">
    <svg class="abs" style="left:3.3px;top:5.3px" width="8" height="5" viewBox="0 0 8 5"><path d="M.3 4.6L4 .6L7.7 4.6Z" fill="#a0a0a0"/></svg>
    <div class="abs" style="left:2.2px;top:15.6px;width:11px;height:127px;background:#c1c1c1"></div>
    <svg class="abs" style="left:3.5px;top:764.5px" width="8" height="5" viewBox="0 0 8 5"><path d="M.3 .4L4 4.6L7.7 .4Z" fill="#505050"/></svg>
  </div>
  <div id="hscroll" class="abs">
    <svg class="abs" style="left:5.5px;top:3.5px" width="5" height="8" viewBox="0 0 5 8"><path d="M4.6 .3L.4 4L4.6 7.7Z" fill="#a0a0a0"/></svg>
    <div class="abs" style="left:15px;top:2px;width:184px;height:11px;background:#c1c1c1"></div>
    <svg class="abs" style="left:916.5px;top:3.5px" width="5" height="8" viewBox="0 0 5 8"><path d="M.4 .3L4.6 4L.4 7.7Z" fill="#505050"/></svg>
  </div>
  <div class="abs" style="left:1091px;top:891px;width:15px;height:15px;background:#dcdcdc"></div>
  <div id="wsfoot" class="abs">
    <div class="sbtn" style="left:860px;top:3.3px;width:18px;height:17px"></div>
    <svg class="abs" style="left:863px;top:6.3px" width="12" height="11" viewBox="0 0 12 11" fill="none" stroke="#888" stroke-width="1"><path d="M.6 2L4 .8L8 2L11.4 .8V9L8 10.2L4 9L.6 10.2ZM4 .8V9M8 2V10.2"/></svg>
    <div class="sbtn" style="left:881px;top:3.3px;width:18px;height:17px;border-right:none"></div>
    <div class="sbtn" style="left:898px;top:3.3px;width:17px;height:17px;border-left:none;border-right:none"></div>
    <div class="sbtn" style="left:914px;top:3.3px;width:18px;height:17px;border-left:none"></div>
    <svg class="abs" style="left:884px;top:6.3px" width="46" height="11" viewBox="0 0 46 11" fill="none" stroke="#666"><path d="M1 5.5H9.5" stroke-width="2.2"/><circle cx="22.5" cy="5.5" r="3.8" stroke-width="1.2"/><path d="M35 5.5H44M39.5 1V10" stroke-width="2.2"/></svg>
  </div>
  <div id="sep" class="abs"><div class="abs" style="left:2px;top:397.5px;width:3px;height:45px;background:#ccc"></div></div>
  <!-- sidebar -->
  <div id="side" class="abs">
    <!-- tabs row: local origin (1114,85) -->
    <div class="abs" style="left:0;top:0;width:283px;height:31px;border-bottom:1px solid #bbb;background:#fff"></div>
    <div class="abs" style="left:3px;top:3px;width:150px;height:29px;border:1px solid #bbb;border-bottom:none;border-radius:4px 4px 0 0;background:#fff"></div>
    <div class="abs" style="left:14.5px;top:8.5px;font-family:'Liberation Serif',serif;font-weight:bold;font-size:12.5px;line-height:15px;color:#555;-webkit-text-stroke:.4px #555">i</div>
    <div class="abs" style="left:31px;top:9.2px;font-weight:bold;font-size:12.5px;line-height:15px;color:#333">info</div>
    <div class="abs" style="left:162px;top:3px;width:26px;height:25px;background:#eee;border:1px solid #ddd;border-bottom:2px solid #bbb"></div>
    <div class="abs" style="left:171px;top:7.5px;font-family:'Liberation Serif',serif;font-weight:bold;font-size:13.5px;line-height:16px;color:#444;-webkit-text-stroke:.4px #444">i</div>
    <div class="sbtn" style="left:193px;top:3px;width:25px;height:25px;border-color:#ddd"></div>
    <svg class="abs" style="left:199px;top:9px" width="13" height="13" viewBox="0 0 13 13" fill="#777" stroke="#777"><ellipse cx="6.5" cy="7.3" rx="2.7" ry="3.7" stroke="none"/><path d="M4.6 2.8A1.9 1.9 0 0 1 8.4 2.8Z" stroke="none"/><path d="M.8 7.3H12.2M1.6 3.5L4.3 5.4M11.4 3.5L8.7 5.4M1.6 11.4L4.3 9.4M11.4 11.4L8.7 9.4" stroke-width="1" fill="none"/></svg>
    <div class="sbtn" style="left:224px;top:3px;width:25px;height:25px;border-color:#ddd"></div>
    <svg class="abs" style="left:230px;top:9px" width="14" height="13" viewBox="0 0 14 13" fill="none" stroke="#777"><path d="M.8 .5V12.2H13.5" stroke-width="1.1"/><path d="M3.7 10.5V7.5M6.4 10.5V4.3M9.1 10.5V6.2M11.8 10.5V2.6" stroke-width="1.5"/></svg>
    <svg class="abs" style="left:263px;top:13px" width="9" height="5" viewBox="0 0 9 5"><path d="M.3 .3H8.7L4.5 4.8Z" fill="#777"/></svg>
    <!-- content: local origin y=31 -> screen 116 -->
    <div class="abs" style="left:0;top:31px;width:267px;height:655px;overflow:hidden">
      <div class="shdr" style="top:0"><svg class="abs" style="left:9px;top:12px" width="10" height="10" viewBox="0 0 10 10" fill="none" stroke="#555" stroke-width="1.2"><path d="M1.5 3.2L5 6.8L8.5 3.2"/></svg>Information</div>
      <div class="abs" style="left:0;top:34px;width:267px;height:1px;background:#ddd"></div>
      <div class="abs" style="left:0;top:35px;width:89px;height:77px;background:#f6f6f6"></div>
      <div class="irow" style="top:35px;height:28px"><span class="k" style="top:5.4px">Flow</span><span class="v" style="top:8.2px;color:#b03338;left:97px;font-size:12.65px">"b66d1223.2ae9b"</span></div>
      <div class="irow" style="top:63px;height:24px"><span class="k" style="top:5px">Name</span><span class="v" style="top:5px">Basic_Flow</span></div>
      <div class="irow" style="top:87px;height:25px"><span class="k" style="top:5px">Status</span><span class="v" style="top:5px">Enabled</span></div>
      <div class="abs" style="left:89px;top:35px;width:1px;height:76px;background:#ddd"></div>
      <div class="abs" style="left:0;top:120px;width:267px;height:1px;background:#ddd"></div>
      <div class="shdr" style="top:121.5px"><svg class="abs" style="left:9px;top:12px" width="10" height="10" viewBox="0 0 10 10" fill="none" stroke="#555" stroke-width="1.2"><path d="M1.5 3.2L5 6.8L8.5 3.2"/></svg>Description</div>
      <div class="abs" style="left:6px;top:168px;font-size:16.3px;line-height:20.5px;color:#555;white-space:nowrap">Basic flow to start with<br>STM32CubeMonitor.</div>
      <div class="abs" style="left:0;top:222px;width:267px;height:1px;background:#ddd"></div>
    </div>
    <!-- sidebar scrollbar -->
    <div class="abs" style="left:267px;top:31px;width:16px;height:655px;background:#f1f1f1">
      <svg class="abs" style="left:3.5px;top:5.5px" width="8" height="5" viewBox="0 0 8 5"><path d="M.3 4.6L4 .6L7.7 4.6Z" fill="#a0a0a0"/></svg>
      <svg class="abs" style="left:3.5px;top:644.5px" width="8" height="5" viewBox="0 0 8 5"><path d="M.3 .4L4 4.6L7.7 .4Z" fill="#a0a0a0"/></svg>
    </div>
    <!-- tips -->
    <div class="abs" style="left:0;top:676px;width:283px;height:10px;background:linear-gradient(180deg,rgba(0,0,0,0),rgba(0,0,0,.07))"></div>
    <div class="abs" style="left:0;top:686px;width:283px;height:135px;background:#fff;border-top:1px solid #bbb"></div>
    <div class="sbtn" style="left:239px;top:693px;width:17px;height:16px;border-color:#ddd"></div>
    <div class="sbtn" style="left:260px;top:693px;width:17px;height:16px;border-color:#ddd"></div>
    <svg class="abs" style="left:243px;top:696px" width="10" height="10" viewBox="0 0 10 10" fill="none" stroke="#666" stroke-width="1.5"><path d="M8.6 4A3.8 3.8 0 0 0 1.7 3M1.4 6A3.8 3.8 0 0 0 8.3 7"/><path d="M1 .6V3.4H3.8M9 9.4V6.6H6.2" stroke-width="1.2"/></svg>
    <svg class="abs" style="left:264px;top:697px" width="9" height="9" viewBox="0 0 9 9"><path d="M1.2 1.2L7.8 7.8M7.8 1.2L1.2 7.8" stroke="#555" stroke-width="2.1"/></svg>
    <div class="tip" style="left:17px;top:719px">Move the selected nodes using the</div>
    <div class="kbd" style="left:243px;top:715px;width:17px;height:25px;"><svg width="11" height="22" viewBox="0 0 11 22" fill="none" stroke="#a2a2a2" stroke-width="1.1"><path d="M2.5 11.5H9.5M5 9L2.5 11.5L5 14"/></svg></div>
    <div class="kbd" style="left:18px;top:742px;width:17px;height:25px;"><svg width="11" height="22" viewBox="0 0 11 22" fill="none" stroke="#a2a2a2" stroke-width="1.1"><path d="M5.5 7.5V16M3 10L5.5 7.5L8 10"/></svg></div>
    <div class="kbd" style="left:39px;top:742px;width:17px;height:25px;"><svg width="11" height="22" viewBox="0 0 11 22" fill="none" stroke="#a2a2a2" stroke-width="1.1"><path d="M5.5 7.5V16M3 13.5L5.5 16L8 13.5"/></svg></div>
    <div class="tip" style="left:60px;top:746px">and</div>
    <div class="kbd" style="left:88px;top:742px;width:17px;height:25px;"><svg width="11" height="22" viewBox="0 0 11 22" fill="none" stroke="#a2a2a2" stroke-width="1.1"><path d="M1.5 11.5H8.5M6 9L8.5 11.5L6 14"/></svg></div>
    <div class="tip" style="left:109px;top:746px">keys. Hold</div>
    <div class="kbd" style="left:181px;top:742px;width:18px;height:25px;"><svg width="11" height="22" viewBox="0 0 11 22" fill="none" stroke="#a2a2a2" stroke-width="1"><path d="M5.5 7.2L2.2 11.2H4V15.8H7V11.2H8.8Z"/></svg></div>
    <div class="tip" style="left:202px;top:746px">to nudge</div>
    <div class="tip" style="left:99px;top:773px">them further</div>
    <div class="abs" style="left:0;top:821px;width:283px;height:24px;background:#f3f3f3;border-top:1px solid #bbb"></div>
  </div>
  <!-- frame -->
  <svg class="abs" style="left:0;top:0" width="1400" height="933" viewBox="0 0 1400 933" fill="none">
    <rect x="3.35" y="2.95" width="1393.2" height="926.6" stroke="#e6f7ff" stroke-width=".7"/>
    <rect x=".85" y=".7" width="1398.3" height="931.5" stroke="#c3d5e7" stroke-width="1.7"/>
    <path d="M2.4 1.6V931.3M1397.6 1.6V931.3M1.7 930.6H1398.3" stroke="#5f7a94" stroke-width="1.45"/><path d="M1.7 2.05H1398.3" stroke="#6a859f" stroke-width="1.15"/>
  </svg>
</div>
</body>
</html>
